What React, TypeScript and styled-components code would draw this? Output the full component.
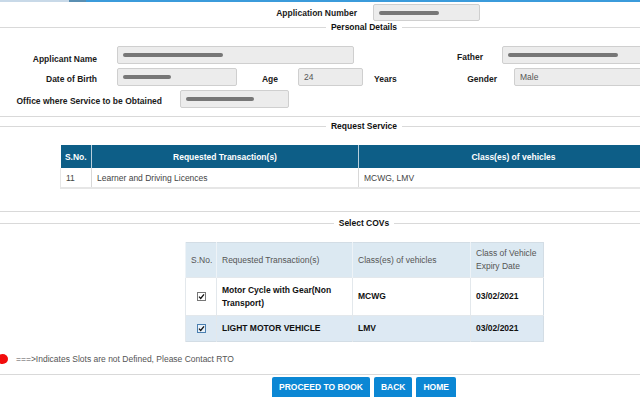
import React from "react";
import styled, { createGlobalStyle } from "styled-components";

const Global = createGlobalStyle`
  html, body { margin: 0; padding: 0; overflow: hidden; background: #fff; }
  * { box-sizing: border-box; }
`;

const Viewport = styled.div`
  width: 100%;
  overflow: hidden;
`;

const Page = styled.div`
  width: 728px;
  font-family: "Liberation Sans", Arial, sans-serif;
  font-size: 8.5px;
  color: #111;
`;

const TopBar = styled.div`
  display: flex;
  height: 2px;
`;
const TopSeg = styled.div<{ $w?: number; $c: string }>`
  background: ${(p) => p.$c};
  ${(p) => (p.$w ? `width: ${p.$w}px;` : "flex: 1;")}
`;

const AppRow = styled.div`
  display: flex;
  align-items: center;
  margin-top: 2px;
`;

const Row = styled.div`
  display: flex;
  align-items: center;
  height: 18px;
`;

const Label = styled.div<{ $w: number; $right?: boolean; $ml?: number; $dy?: number }>`
  width: ${(p) => p.$w}px;
  flex: none;
  text-align: ${(p) => (p.$right ? "right" : "left")};
  margin-left: ${(p) => p.$ml ?? 0}px;
  padding-top: ${(p) => p.$dy ?? 2}px;
  font-weight: bold;
  white-space: nowrap;
  color: #1a1a1a;
`;

const Input = styled.div<{ $w: number; $ml: number; $h?: number }>`
  width: ${(p) => p.$w}px;
  height: ${(p) => p.$h ?? 18}px;
  margin-left: ${(p) => p.$ml}px;
  flex: none;
  background: #ececec;
  border: 1px solid #cfcfcf;
  border-radius: 2px;
  display: flex;
  align-items: center;
  padding-left: 5px;
  color: #555;
`;

const Redact = styled.span<{ $w: number }>`
  display: inline-block;
  width: ${(p) => p.$w}px;
  height: 4px;
  border-radius: 3px;
  background: #777;
  filter: blur(0.7px);
`;

const Fieldset = styled.fieldset<{ $mt: number; $pt: number; $pb: number }>`
  margin: ${(p) => p.$mt}px 0 0 0;
  padding: ${(p) => p.$pt}px 0 ${(p) => p.$pb}px 0;
  border: none;
  border-top: 1px solid #d9d9d9;
  border-bottom: 1px solid #d9d9d9;
  min-width: 0;
`;

const Legend = styled.legend`
  margin: 0 auto;
  padding: 0 5px;
  font-weight: bold;
  line-height: 10px;
  color: #111;
`;

const Rows = styled.div`
  display: flex;
  flex-direction: column;
  gap: 4px;
`;

const ReqTable = styled.table`
  margin-left: 60px;
  width: 608px;
  border-collapse: collapse;
  table-layout: fixed;
`;

const ReqTh = styled.th<{ $w?: number }>`
  ${(p) => (p.$w ? `width: ${p.$w}px;` : "")}
  background: #0d5e87;
  color: #fff;
  font-weight: bold;
  height: 23px;
  padding: 0;
  text-align: center;
  border-left: 1px solid #b9cfdc;
  &:first-child { border-left: none; }
`;

const ReqTd = styled.td`
  height: 20px;
  padding: 0 0 0 5px;
  color: #444;
  border-left: 1px solid #d8d8d8;
  border-bottom: 2px solid #e6e6e6;
  &:first-child { border-left: 1px solid #e6e6e6; }
`;

const CovTable = styled.table`
  margin-left: 185px;
  width: 358px;
  border-collapse: collapse;
  table-layout: fixed;
  border: 1px solid #d3dde5;
`;

const CovTh = styled.th<{ $w: number }>`
  width: ${(p) => p.$w}px;
  background: #dce9f2;
  color: #555;
  font-weight: normal;
  text-align: left;
  height: 35px;
  padding: 0 5px;
  line-height: 13px;
  border-left: 1px solid #eef3f7;
`;

const CovTr = styled.tr<{ $alt?: boolean }>`
  background: ${(p) => (p.$alt ? "#dde9f3" : "#fff")};
`;

const CovTd = styled.td<{ $h: number; $center?: boolean }>`
  height: ${(p) => p.$h}px;
  padding: 0 5px;
  font-weight: bold;
  color: #111;
  line-height: 13px;
  text-align: ${(p) => (p.$center ? "center" : "left")};
  border-left: 1px solid #e3e8ec;
  border-top: 1px solid #e3e8ec;
`;

const Note = styled.div`
  display: flex;
  align-items: center;
  margin-top: 12px;
  height: 10px;
  color: #555;
`;

const Dot = styled.span`
  width: 11px;
  height: 10px;
  border-radius: 50%;
  background: #f20d0d;
  margin-left: -3px;
  margin-right: 8px;
`;

const Buttons = styled.div`
  display: flex;
  justify-content: center;
  gap: 4px;
  margin-top: 2px;
`;

const Button = styled.button`
  height: 22px;
  padding: 0 7px 2px;
  border: none;
  border-radius: 2px 2px 0 0;
  background: #0b87d4;
  color: #fff;
  font-family: "Liberation Sans", Arial, sans-serif;
  font-size: 8.5px;
  font-weight: bold;
`;

const Box = ({ blue }: { blue?: boolean }) => (
  <svg width="9" height="9" viewBox="0 0 9 9" style={{ display: "block", margin: "0 auto" }}>
    <rect x="0.5" y="0.5" width="8" height="8" fill={blue ? "#e8f2fb" : "#fff"} stroke={blue ? "#4a7fb0" : "#777"} />
    <path d="M2 4.6 L3.7 6.4 L7 2.3" fill="none" stroke="#111" strokeWidth="1.3" />
  </svg>
);

export default function App() {
  return (
    <Viewport>
      <Global />
      <Page>
        <TopBar>
          <TopSeg $w={69} $c="#c8d9e8" />
          <TopSeg $w={17} $c="#5a8fb2" />
          <TopSeg $c="#3b9bdb" />
        </TopBar>

        <AppRow>
          <Label $w={357} $right $dy={0}>Application Number</Label>
          <Input $w={107} $ml={16} $h={17}>
            <Redact $w={60} />
          </Input>
        </AppRow>

        <Fieldset $mt={1} $pt={14} $pb={8}>
          <Legend>Personal Details</Legend>
          <Rows>
            <Row>
              <Label $w={97} $right $dy={8}>Applicant Name</Label>
              <Input $w={237} $ml={20}>
                <Redact $w={100} />
              </Input>
              <Label $w={129} $right $dy={4}>Father</Label>
              <Input $w={170} $ml={19}>
                <Redact $w={110} />
              </Input>
            </Row>
            <Row>
              <Label $w={97} $right $dy={4}>Date of Birth</Label>
              <Input $w={120} $ml={20}>
                <Redact $w={48} />
              </Input>
              <Label $w={41} $right $dy={4}>Age</Label>
              <Input $w={65} $ml={20}>24</Input>
              <Label $w={34} $ml={11} $dy={4}>Years</Label>
              <Label $w={89} $right $dy={4}>Gender</Label>
              <Input $w={160} $ml={17}>Male</Input>
            </Row>
            <Row>
              <Label $w={162} $right $dy={4}>Office where Service to be Obtained</Label>
              <Input $w={109} $ml={18}>
                <Redact $w={68} />
              </Input>
            </Row>
          </Rows>
        </Fieldset>

        <Fieldset $mt={4} $pt={14} $pb={22}>
          <Legend>Request Service</Legend>
          <ReqTable>
            <thead>
              <tr>
                <ReqTh $w={31}>S.No.</ReqTh>
                <ReqTh $w={267}>Requested Transaction(s)</ReqTh>
                <ReqTh>Class(es) of vehicles</ReqTh>
              </tr>
            </thead>
            <tbody>
              <tr>
                <ReqTd>11</ReqTd>
                <ReqTd>Learner and Driving Licences</ReqTd>
                <ReqTd>MCWG, LMV</ReqTd>
              </tr>
            </tbody>
          </ReqTable>
        </Fieldset>

        <Fieldset $mt={6} $pt={14} $pb={10}>
          <Legend>Select COVs</Legend>
          <CovTable>
            <thead>
              <tr>
                <CovTh $w={31}>S.No.</CovTh>
                <CovTh $w={136}>Requested Transaction(s)</CovTh>
                <CovTh $w={118}>Class(es) of vehicles</CovTh>
                <CovTh $w={73}>Class of Vehicle Expiry Date</CovTh>
              </tr>
            </thead>
            <tbody>
              <CovTr>
                <CovTd $h={38} $center><Box /></CovTd>
                <CovTd $h={38}>Motor Cycle with Gear(Non Transport)</CovTd>
                <CovTd $h={38}>MCWG</CovTd>
                <CovTd $h={38}>03/02/2021</CovTd>
              </CovTr>
              <CovTr $alt>
                <CovTd $h={26} $center><Box blue /></CovTd>
                <CovTd $h={26}>LIGHT MOTOR VEHICLE</CovTd>
                <CovTd $h={26}>LMV</CovTd>
                <CovTd $h={26}>03/02/2021</CovTd>
              </CovTr>
            </tbody>
          </CovTable>
          <Note>
            <Dot />
            ===&gt;Indicates Slots are not Defined, Please Contact RTO
          </Note>
        </Fieldset>

        <Buttons>
          <Button>PROCEED TO BOOK</Button>
          <Button>BACK</Button>
          <Button>HOME</Button>
        </Buttons>
      </Page>
    </Viewport>
  );
}
